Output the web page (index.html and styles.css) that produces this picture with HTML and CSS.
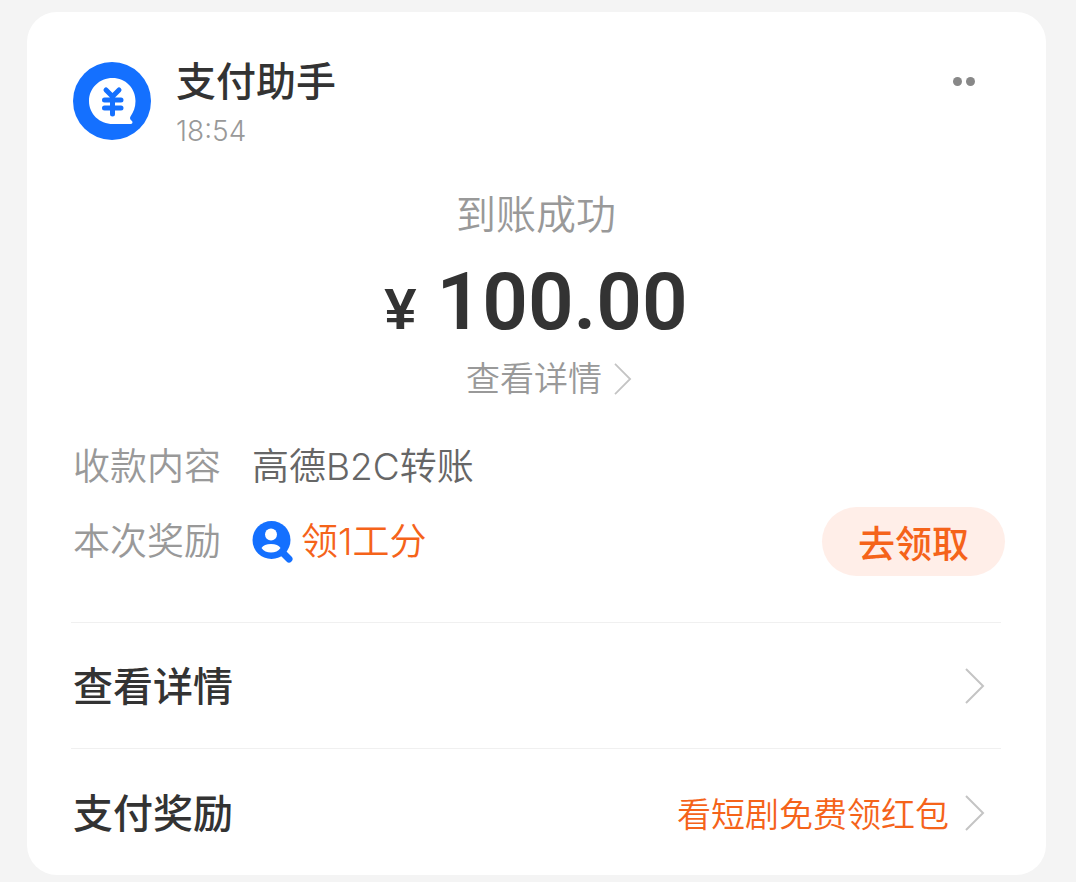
FILE: index.html
```html
<!DOCTYPE html>
<html lang="zh-CN">
<head>
    <meta charset="UTF-8">
    <meta name="viewport" content="width=device-width, initial-scale=1.0">
    <title>支付助手</title>
    <link rel="stylesheet" href="styles.css">
</head>
<body>
    <main class="card">
        <header class="header">
            <svg class="avatar" viewBox="0 0 78 78" aria-hidden="true">
                <circle cx="39" cy="39" r="39" fill="#1470ff"/>
                <path d="M39.500 16C52.500 16 62.500 26 62.500 39C62.500 45.500 60.500 50 57.500 54.500C56.500 56 57 57.500 59 59C60 60 59.500 62 57.500 62H40C26.500 62 16 52 16 39C16 26 26.500 16 39.500 16Z" fill="#fff"/>
                <path d="M33 28L39.500 34.500L46 28M31.500 38H48M31.500 46H48M39.500 35V52" fill="none" stroke="#1470ff" stroke-width="5" stroke-linecap="round" stroke-linejoin="round"/>
            </svg>
            <div class="header-text">
                <h1 class="title">支付助手</h1>
                <time class="time">18:54</time>
            </div>
            <button class="more" type="button" aria-label="更多"><span class="dot"></span><span class="dot"></span></button>
        </header>

        <section class="summary">
            <p class="status">到账成功</p>
            <p class="amount"><span class="currency">¥</span><span>100.00</span></p>
            <a class="detail-link" href="#">查看详情
                <svg class="arrow-small" viewBox="0 0 20 36" aria-hidden="true"><path d="M1 1L18 18L1 35"/></svg>
            </a>
        </section>

        <dl class="info">
            <div class="info-row">
                <dt>收款内容</dt>
                <dd>高德B2C转账</dd>
            </div>
            <div class="info-row">
                <dt>本次奖励</dt>
                <dd class="reward">
                    <svg class="reward-icon" viewBox="0 0 41 42" aria-hidden="true">
                        <path d="M29 30L37 38" stroke="#1470ff" stroke-width="7" stroke-linecap="round"/>
                        <circle cx="19.500" cy="19" r="19" fill="#1470ff"/>
                        <circle cx="19" cy="13.500" r="6" fill="#fff"/>
                        <path d="M9.500 27C11 24.500 14.500 23 19 23C23.500 23 27 24.500 28.500 27C26.500 30 23 31.500 19 31.500C15 31.500 11.500 30 9.500 27Z" fill="#fff"/>
                    </svg>
                    <span>领1工分</span>
                </dd>
                <dd class="action"><button class="claim" type="button">去领取</button></dd>
            </div>
        </dl>

        <nav class="links">
            <a class="link-row" href="#">
                <span class="link-title">查看详情</span>
                <svg class="arrow" viewBox="0 0 20 36" aria-hidden="true"><path d="M1 1L18 18L1 35"/></svg>
            </a>
            <a class="link-row" href="#">
                <span class="link-title">支付奖励</span>
                <span class="promo">看短剧免费领红包</span>
                <svg class="arrow" viewBox="0 0 20 36" aria-hidden="true"><path d="M1 1L18 18L1 35"/></svg>
            </a>
        </nav>
    </main>
</body>
</html>
```
FILE: styles.css
```css
* {
    box-sizing: border-box;
}

body {
    margin: 0;
    padding: 12px 30px 6px 27px;
    background-color: #f4f4f4;
    color: #333;
    font-family: Inter, "Noto Sans CJK SC", sans-serif;
    font-weight: 350;
}

h1, p, dl, dd {
    margin: 0;
}

a {
    color: inherit;
    text-decoration: none;
}

button {
    border: none;
    padding: 0;
    font-family: inherit;
    cursor: pointer;
}

.card {
    padding: 50px 45px 0 44px;
    background-color: #fff;
    border-radius: 30px;
}

.header {
    display: flex;
    align-items: flex-start;
    padding: 0 26px 0 2px;
}

.avatar {
    width: 78px;
    height: 78px;
}

.header-text {
    flex: 1;
    margin-left: 25px;
}

.title {
    font-size: 40px;
    line-height: 40px;
    font-weight: 500;
}

.time {
    display: block;
    margin-top: 10px;
    font-size: 28px;
    line-height: 38px;
    color: #999;
}

.more {
    display: flex;
    gap: 4px;
    padding: 15px 0;
    background: none;
}

.dot {
    width: 9px;
    height: 9px;
    border-radius: 50%;
    background-color: #888;
}

.summary {
    display: flex;
    flex-direction: column;
    align-items: center;
    margin-top: 40px;
    color: #999;
}

.status {
    font-size: 40px;
    line-height: 50px;
}

.amount {
    display: flex;
    align-items: baseline;
    gap: 20px;
    margin-top: 20px;
    font-family: Roboto, sans-serif;
    font-size: 80px;
    line-height: 84px;
    font-weight: 600;
    color: #333;
}

.currency {
    font-family: "Liberation Sans", sans-serif;
    font-size: 58px;
}

.detail-link {
    display: flex;
    align-items: center;
    gap: 12px;
    margin-top: 6px;
    padding-left: 26px;
    font-size: 34px;
    line-height: 44px;
}

.arrow, .arrow-small {
    fill: none;
    stroke: #c4c4c4;
    stroke-width: 2;
}

.arrow {
    width: 20px;
    height: 36px;
}

.arrow-small {
    width: 18px;
    height: 32px;
}

.info {
    margin-top: 28px;
    padding-left: 2px;
    font-size: 37px;
    line-height: 44px;
}

.info-row {
    display: flex;
    align-items: center;
    height: 75px;
}

.info dt {
    width: 179px;
    color: #999;
}

.info dd {
    color: #666;
}

.info .reward {
    display: flex;
    align-items: center;
    gap: 8px;
    color: #f5631a;
}

.reward-icon {
    width: 41px;
    height: 42px;
}

.info .action {
    margin-left: auto;
    margin-right: -4px;
}

.claim {
    display: block;
    padding: 0 36px;
    height: 69px;
    border-radius: 35px;
    background-color: #ffeee8;
    color: #f5631a;
    font-size: 37px;
    font-weight: 500;
}

.links {
    margin-top: 43px;
}

.link-row {
    display: flex;
    align-items: center;
    height: 126px;
    padding: 0 16px 0 2px;
    border-top: 1px solid #f0f0f0;
}

.link-row:last-child {
    height: 127px;
    padding-top: 2px;
}

.link-title {
    flex: 1;
    padding-bottom: 4px;
    font-size: 40px;
    font-weight: 500;
}

.promo {
    margin-right: 16px;
    padding-bottom: 2px;
    font-size: 34px;
    color: #f5631a;
}
```
